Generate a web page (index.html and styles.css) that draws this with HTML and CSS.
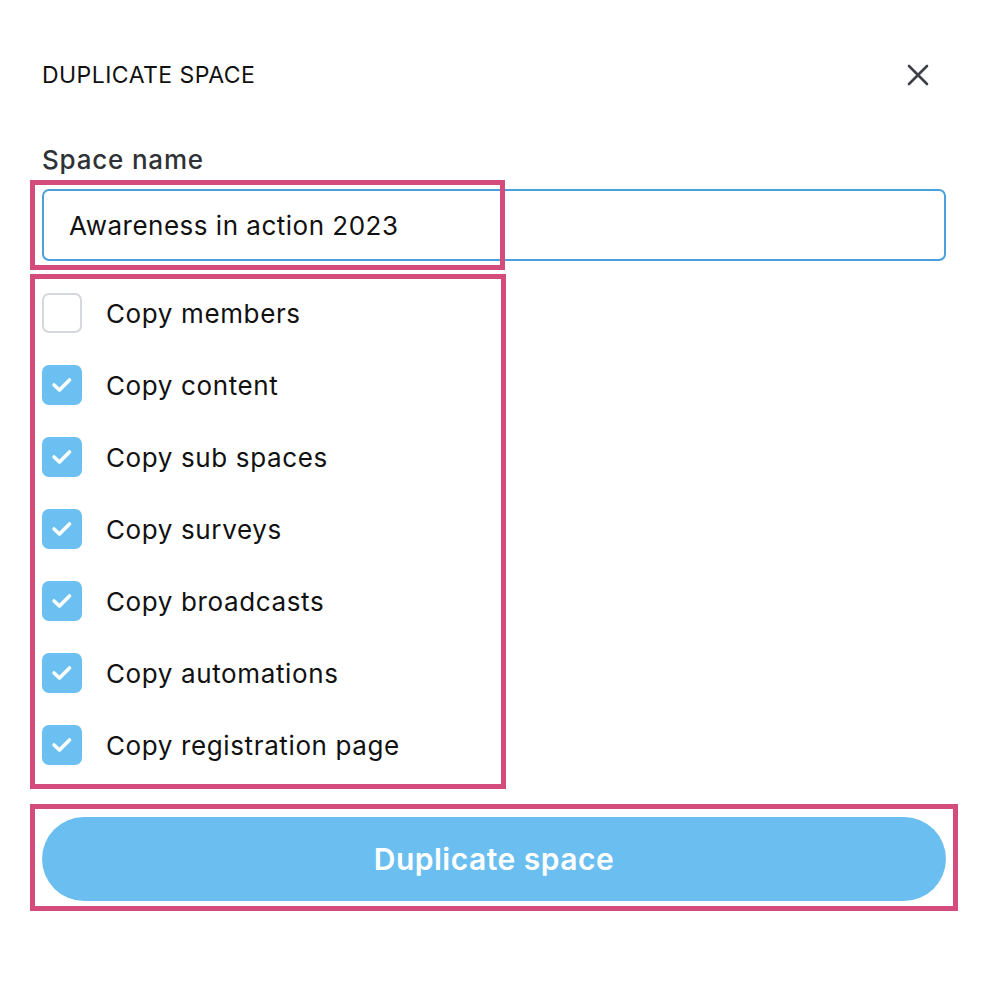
FILE: index.html
```html
<!DOCTYPE html>
<html lang="en">
<head>
    <meta charset="UTF-8">
    <meta name="viewport" content="width=device-width, initial-scale=1.0">
    <title>Duplicate Space</title>
    <link rel="stylesheet" href="styles.css">
</head>
<body>
<div class="dialog">
    <div class="header">
        <h2 class="title">DUPLICATE SPACE</h2>
        <button class="close-button" aria-label="Close">
            <svg width="22" height="22" viewBox="0 0 22 22">
                <path d="M2 2 L20 20 M20 2 L2 20" stroke="#3d4147" stroke-width="2.6" stroke-linecap="round" fill="none"/>
            </svg>
        </button>
    </div>

    <label class="field-label" for="spaceName">Space name</label>
    <div class="text-input">Awareness in action 2023</div>

    <div class="options">
        <div class="option">
            <span class="checkbox"></span>
            <span class="option-label">Copy members</span>
        </div>
        <div class="option">
            <span class="checkbox checked"><svg viewBox="0 0 40 40"><polyline points="12,20 17.5,25 27.5,15"/></svg></span>
            <span class="option-label">Copy content</span>
        </div>
        <div class="option">
            <span class="checkbox checked"><svg viewBox="0 0 40 40"><polyline points="12,20 17.5,25 27.5,15"/></svg></span>
            <span class="option-label">Copy sub spaces</span>
        </div>
        <div class="option">
            <span class="checkbox checked"><svg viewBox="0 0 40 40"><polyline points="12,20 17.5,25 27.5,15"/></svg></span>
            <span class="option-label">Copy surveys</span>
        </div>
        <div class="option">
            <span class="checkbox checked"><svg viewBox="0 0 40 40"><polyline points="12,20 17.5,25 27.5,15"/></svg></span>
            <span class="option-label">Copy broadcasts</span>
        </div>
        <div class="option">
            <span class="checkbox checked"><svg viewBox="0 0 40 40"><polyline points="12,20 17.5,25 27.5,15"/></svg></span>
            <span class="option-label">Copy automations</span>
        </div>
        <div class="option">
            <span class="checkbox checked"><svg viewBox="0 0 40 40"><polyline points="12,20 17.5,25 27.5,15"/></svg></span>
            <span class="option-label">Copy registration page</span>
        </div>
    </div>

    <button class="primary-button">Duplicate space</button>

    <!-- highlight boxes drawn on top of the form -->
    <div class="highlight highlight-name"></div>
    <div class="highlight highlight-options"></div>
    <div class="highlight highlight-button"></div>
</div>
</body>
</html>
```

FILE: styles.css
```css
* {
    box-sizing: border-box;
}
body {
    margin: 0;
    padding: 0;
    background-color: #ffffff;
    font-family: Inter, "Noto Sans", sans-serif;
    color: #111111;
}
.dialog {
    position: relative;
    width: 992px;
    height: 1008px;
    padding: 0 46px 0 42px;
    display: flex;
    flex-direction: column;
}
.header {
    margin-top: 60px;
    height: 30px;
    display: flex;
    align-items: center;
    justify-content: space-between;
}
.title {
    margin: 0;
    font-size: 23px;
    line-height: 30px;
    font-weight: 400;
    letter-spacing: 0.45px;
    color: #111111;
}
.close-button {
    margin-right: 17px;
    padding: 0;
    border: none;
    background: none;
    width: 22px;
    height: 22px;
    display: flex;
}
.field-label {
    margin-top: 55px;
    font-size: 26px;
    line-height: 30px;
    font-weight: 500;
    letter-spacing: 0.8px;
    color: #2f3236;
}
.text-input {
    margin-top: 14px;
    height: 72px;
    border: 2px solid #4aa0dc;
    border-radius: 7px;
    padding-left: 25px;
    display: flex;
    align-items: center;
    font-size: 26px;
    letter-spacing: 0.5px;
    color: #111111;
}
.options {
    margin-top: 16px;
    display: flex;
    flex-direction: column;
}
.option {
    height: 72px;
    display: flex;
    align-items: center;
    gap: 24px;
}
.checkbox {
    width: 40px;
    height: 40px;
    border: 2px solid #d5d8dc;
    border-radius: 7px;
    background-color: #ffffff;
    flex-shrink: 0;
}
.checkbox.checked {
    border: none;
    background-color: #6cc0f1;
}
.checkbox svg {
    display: block;
    width: 40px;
    height: 40px;
}
.checkbox polyline {
    fill: none;
    stroke: #ffffff;
    stroke-width: 3.6;
    stroke-linecap: round;
    stroke-linejoin: round;
}
.option-label {
    font-size: 26px;
    letter-spacing: 0.62px;
    color: #111111;
}
.primary-button {
    margin-top: 36px;
    height: 84px;
    border: none;
    border-radius: 42px;
    background-color: #6bbff0;
    color: #ffffff;
    font-family: inherit;
    font-size: 30px;
    font-weight: 600;
    letter-spacing: 0.5px;
}
.highlight {
    position: absolute;
    border: 5px solid #d44c7c;
}
.highlight-name {
    left: 30px;
    top: 180px;
    width: 475px;
    height: 90px;
}
.highlight-options {
    left: 30px;
    top: 274px;
    width: 476px;
    height: 515px;
}
.highlight-button {
    left: 30px;
    top: 804px;
    width: 928px;
    height: 107px;
}
```
